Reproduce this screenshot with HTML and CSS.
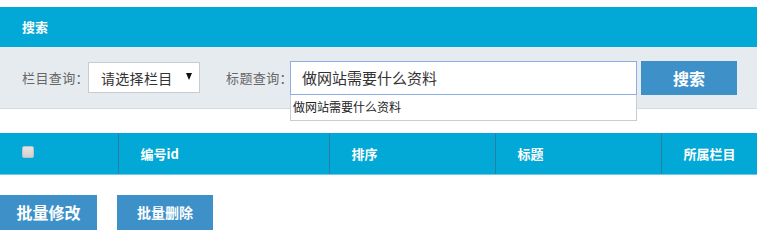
FILE: index.html
```html
<!DOCTYPE html>
<html lang="zh-CN">
<head>
<meta charset="utf-8">
<title>搜索</title>
<link rel="stylesheet" href="styles.css">
</head>
<body>
<div class="page">
  <section class="panel">
    <div class="panel-head">搜索</div>
    <form class="search-row">
      <label class="lbl">栏目查询：</label>
      <div class="select">
        <span class="select-text">请选择栏目</span>
        <span class="select-arrow"></span>
      </div>
      <label class="lbl lbl2">标题查询：</label>
      <div class="input-wrap">
        <div class="input">做网站需要什么资料</div>
        <div class="suggest">做网站需要什么资料</div>
      </div>
      <button type="button" class="btn btn-search">搜索</button>
    </form>
  </section>

  <table class="grid">
    <colgroup>
      <col class="c1"><col class="c2"><col class="c3"><col class="c4"><col class="c5">
    </colgroup>
    <thead>
      <tr>
        <th><span class="chk"></span></th>
        <th>编号id</th>
        <th>排序</th>
        <th>标题</th>
        <th>所属栏目</th>
      </tr>
    </thead>
  </table>

  <div class="actions">
    <button type="button" class="btn btn-big">批量修改</button>
    <button type="button" class="btn btn-small">批量删除</button>
  </div>
</div>
</body>
</html>
```

FILE: styles.css
```css
* { box-sizing: border-box; }
html, body { margin: 0; padding: 0; background: #fff; }
body {
  font-family: "Noto Sans CJK SC", "Liberation Sans", sans-serif;
  color: #555;
}
.page { padding-top: 7px; width: 757px; }

.panel { background: #e6ebf0; border-bottom: 1px solid #d5dade; }
.panel-head {
  height: 40px;
  background: #02a8d6;
  color: #fff;
  font-weight: bold;
  font-size: 13px;
  line-height: 40px;
  padding-left: 22px;
}
.search-row {
  display: flex;
  align-items: center;
  height: 61px;
  padding-left: 22px;
  margin: 0;
}
.lbl {
  font-size: 13px;
  color: #666;
  width: 66px;
  flex-shrink: 0;
  white-space: nowrap;
  letter-spacing: 0.4px;
}
.lbl2 { margin-left: 26px; width: 64px; }
.select {
  width: 112px;
  height: 31px;
  flex-shrink: 0;
  background: #fff;
  border: 1px solid #c8ccd0;
  display: flex;
  align-items: center;
  justify-content: space-between;
  padding: 0 7px 0 12px;
  font-size: 14px;
  color: #333;
}
.select-text { letter-spacing: 0.3px; }
.select-arrow {
  width: 0; height: 0;
  border-left: 3px solid transparent;
  border-right: 3px solid transparent;
  border-top: 7px solid #111;
  margin-top: -2px;
}
.input-wrap { position: relative; width: 347px; height: 34px; flex-shrink: 0; }
.input {
  height: 34px;
  border: 1px solid #8eaee6;
  background: #fff;
  font-size: 15px;
  color: #333;
  line-height: 32px;
  padding-left: 11px;
}
.suggest {
  position: absolute;
  left: 0; top: 34px;
  width: 347px; height: 26px;
  background: #fff;
  border: 1px solid #c9ccd0;
  border-top: none;
  font-size: 12px;
  color: #222;
  line-height: 24px;
  padding-left: 2px;
  z-index: 2;
}
.btn {
  border: none;
  background: #3d91c8;
  color: #fff;
  font-family: "Noto Sans CJK SC", "Liberation Sans", sans-serif;
  font-weight: bold;
  padding: 0;
  cursor: pointer;
}
.btn-search { width: 96px; height: 34px; margin-left: 4px; font-size: 16px; flex-shrink: 0; }

.grid {
  margin-top: 24px;
  width: 757px;
  border-collapse: collapse;
  table-layout: fixed;
}
.c1 { width: 118px; } .c2 { width: 211px; } .c3 { width: 166px; } .c4 { width: 166px; } .c5 { width: 96px; }
.grid th {
  height: 41px;
  background: #02a8d6;
  color: #fff;
  font-size: 13px;
  font-weight: bold;
  text-align: left;
  padding: 0 0 0 22px;
  border-left: 1px solid #2b7f9e;
  border-bottom: 1px solid #6cc9e6;
}
.grid th:first-child { border-left: none; }
.chk {
  display: inline-block;
  width: 12px; height: 12px;
  background: linear-gradient(#e4e4e4, #d0d0d0);
  border: 1px solid #b8c2c8;
  border-radius: 2px;
  vertical-align: middle;
  margin-top: -6px;
}

.actions { display: flex; gap: 20px; margin-top: 20px; }
.btn-big { width: 97px; height: 35px; font-size: 16px; }
.btn-small { width: 96px; height: 35px; font-size: 14px; }
```
